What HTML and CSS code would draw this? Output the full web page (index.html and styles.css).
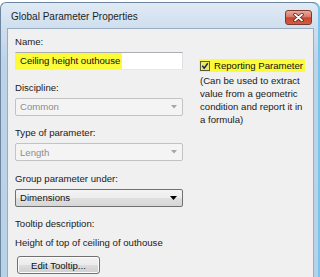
FILE: index.html
```html
<!DOCTYPE html>
<html>
<head>
<meta charset="utf-8">
<link rel="stylesheet" href="styles.css">
</head>
<body>
<div class="window">
  <div class="titlebar">
    <span class="title">Global Parameter Properties</span>
    <div class="close">
      <svg width="13" height="9" viewBox="0 0 13 9">
        <path d="M3 1.5 L10 7.5 M10 1.5 L3 7.5" stroke="#5a1d14" stroke-width="3.4" stroke-linecap="round"/>
        <path d="M3 1.5 L10 7.5 M10 1.5 L3 7.5" stroke="#ffffff" stroke-width="1.8" stroke-linecap="round"/>
      </svg>
    </div>
  </div>
  <div class="panel">
    <div class="col-left">
      <div class="field">
        <div class="label">Name:</div>
        <div class="input"><span class="hl">Ceiling height outhouse</span></div>
      </div>
      <div class="field">
        <div class="label">Discipline:</div>
        <div class="combo disabled"><span>Common</span>
          <svg width="6" height="4" viewBox="0 0 6 4"><path d="M0 0 H6 L3 3.5 Z" fill="#a6a6a6"/></svg>
        </div>
      </div>
      <div class="field">
        <div class="label">Type of parameter:</div>
        <div class="combo disabled"><span>Length</span>
          <svg width="6" height="4" viewBox="0 0 6 4"><path d="M0 0 H6 L3 3.5 Z" fill="#a6a6a6"/></svg>
        </div>
      </div>
      <div class="field">
        <div class="label">Group parameter under:</div>
        <div class="combo active"><span>Dimensions</span>
          <svg width="7" height="4" viewBox="0 0 7 4"><path d="M0 0 H7 L3.5 4 Z" fill="#000"/></svg>
        </div>
      </div>
      <div class="tip">
        <div class="label">Tooltip description:</div>
        <div class="label tiptext">Height of top of ceiling of outhouse</div>
        <div class="button">Edit Tooltip...</div>
      </div>
    </div>
    <div class="col-right">
      <div class="check-row">
        <svg class="cb" width="10" height="10" viewBox="0 0 10 10">
          <rect x="0.5" y="0.5" width="9" height="9" fill="#e9e96a" stroke="#5b5b3a"/>
          <path d="M2.3 4.8 L4.2 7.2 L7.8 2.2" fill="none" stroke="#22284a" stroke-width="1.5"/>
        </svg>
        <span>Reporting Parameter</span>
      </div>
      <p class="desc">(Can be used to extract<br>value from a geometric<br>condition and report it in<br>a formula)</p>
    </div>
  </div>
</div>
</body>
</html>
```

FILE: styles.css
```css
html, body {
  margin: 0;
  padding: 0;
}
body {
  width: 320px;
  height: 277px;
  overflow: hidden;
  background: #ffffff;
  font-family: "Liberation Sans", Arial, sans-serif;
  font-size: 9.6px;
  color: #1a1a1a;
}
.window {
  margin-top: 2px;
  height: 274px;
  display: flex;
  flex-direction: column;
  border-top: 1px solid #6d86a0;
  border-left: 1px solid #6d86a0;
  border-radius: 6px 7px 0 0;
  background: linear-gradient(#e0eaf4, #cfdeee 26px, #bdd3e8 60px, #b9d1e6);
  box-shadow: inset -2px 0 0 #7cc5ee;
}
.titlebar {
  height: 25px;
  flex: none;
  display: flex;
  align-items: flex-start;
  justify-content: space-between;
  padding: 0 8px 0 10px;
}
.title {
  margin-top: 7px;
  font-size: 10px;
  line-height: 13px;
  color: #1e1e1e;
}
.close {
  margin-top: 7px;
  width: 27px;
  height: 15px;
  box-sizing: border-box;
  border: 1px solid #7b3a2f;
  border-radius: 3px;
  background: linear-gradient(#eaa99b, #d77a68 45%, #c7462d 52%, #d35d40);
  display: flex;
  align-items: center;
  justify-content: center;
}
.panel {
  flex: 1;
  min-height: 0;
  margin: 0 6px;
  border: 1px solid #98adc2;
  border-bottom: none;
  background: #f0f0f0;
  display: flex;
  gap: 16px;
  padding: 6px 0 0 7px;
  overflow: hidden;
}
.col-left {
  width: 168px;
  display: flex;
  flex-direction: column;
  gap: 10.5px;
}
.field {
  display: flex;
  flex-direction: column;
  gap: 3px;
}
.label {
  line-height: 14px;
  height: 14px;
  white-space: nowrap;
}
.input {
  height: 18px;
  box-sizing: border-box;
  border: 1px solid #abadb3;
  border-left-color: #e2e3ea;
  border-right-color: #dbdfe6;
  border-bottom-color: #e3e9ef;
  background: #ffffff;
  display: flex;
  align-items: center;
}
.hl {
  display: inline-block;
  height: 16px;
  line-height: 16px;
  padding: 0 2px 0 4px;
  background: #fbfb3a;
  color: #111;
}
.combo {
  height: 18px;
  box-sizing: border-box;
  border-radius: 2px;
  display: flex;
  align-items: center;
  justify-content: space-between;
  padding: 0 5px 0 4px;
}
.combo.disabled {
  border: 1px solid #c3c3c3;
  background: #f4f4f4;
  color: #8d8d8d;
}
.combo.active {
  border: 1px solid #707070;
  background: linear-gradient(#f4f4f4, #ececec 50%, #e0e0e0 50%, #d6d6d6);
  color: #111;
}
.tip {
  display: flex;
  flex-direction: column;
}
.tiptext {
  margin-top: 5px;
}
.button {
  margin: 6px 0 0 2px;
  width: 83px;
  height: 18px;
  box-sizing: border-box;
  border: 1px solid #707070;
  border-radius: 3px;
  background: linear-gradient(#f2f2f2, #ebebeb 50%, #dddddd 50%, #cfcfcf);
  box-shadow: inset 0 0 0 1px #fcfcfc;
  display: flex;
  align-items: center;
  justify-content: center;
  color: #111;
}
.col-right {
  padding-top: 24px;
}
.check-row {
  display: inline-flex;
  align-items: center;
  height: 13px;
  padding: 0 2px 0 1px;
  gap: 4px;
  background: #fbfb3a;
  color: #111;
}
.cb {
  display: block;
}
.desc {
  margin: 1px 0 0 1px;
  line-height: 13px;
  white-space: nowrap;
}
```
